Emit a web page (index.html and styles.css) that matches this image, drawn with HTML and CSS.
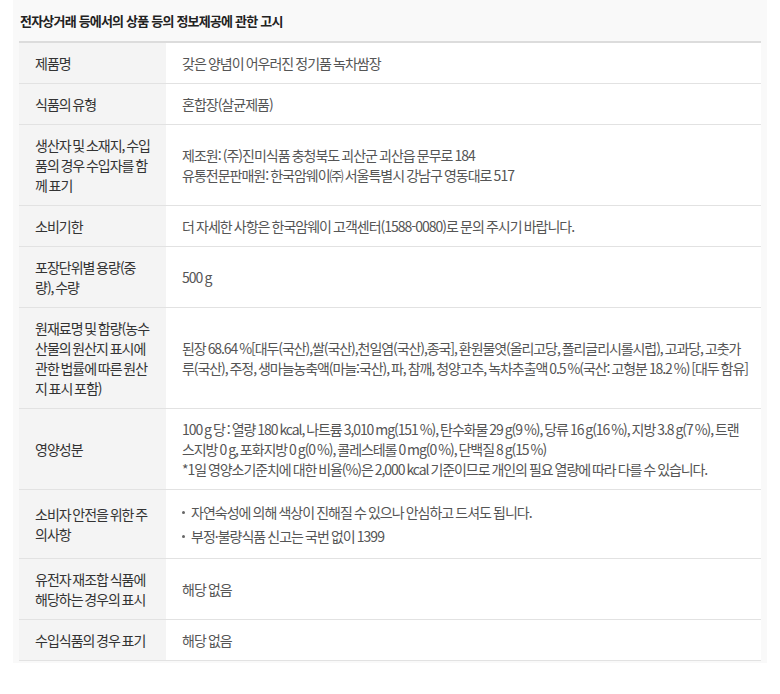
FILE: index.html
```html
<!DOCTYPE html>
<html lang="ko">
<head>
<meta charset="utf-8">
<title>상품정보제공 고시</title>
<link rel="stylesheet" href="styles.css">
</head>
<body>
<section class="notice">
  <h2 class="notice-title">전자상거래 등에서의 상품 등의 정보제공에 관한 고시</h2>
  <table class="info-table">
    <tbody>
      <tr><th>제품명</th><td>갖은 양념이 어우러진 정기품 녹차쌈장</td></tr>
      <tr><th>식품의 유형</th><td>혼합장(살균제품)</td></tr>
      <tr><th>생산자 및 소재지, 수입품의 경우 수입자를 함께 표기</th><td>제조원: (주)진미식품 충청북도 괴산군 괴산읍 문무로 184<br>유통전문판매원: 한국암웨이㈜ 서울특별시 강남구 영동대로 517</td></tr>
      <tr><th>소비기한</th><td>더 자세한 사항은 한국암웨이 고객센터(1588-0080)로 문의 주시기 바랍니다.</td></tr>
      <tr><th>포장단위별 용량(중량), 수량</th><td>500 g</td></tr>
      <tr><th>원재료명 및 함량(농수산물의 원산지 표시에 관한 법률에 따른 원산지 표시 포함)</th><td class="fixed-lines">된장 68.64 %[대두(국산),쌀(국산),천일염(국산),종국], 환원물엿(올리고당, 폴리글리시롤시럽), 고과당, 고춧가<br>루(국산), 주정, 생마늘농축액(마늘:국산), 파, 참깨, 청양고추, 녹차추출액 0.5 %(국산: 고형분 18.2 %) [대두 함유]</td></tr>
      <tr><th>영양성분</th><td class="fixed-lines">100 g 당 : 열량 180 kcal, 나트륨 3,010 mg(151 %), 탄수화물 29 g(9 %), 당류 16 g(16 %), 지방 3.8 g(7 %), 트랜<br>스지방 0 g, 포화지방 0 g(0 %), 콜레스테롤 0 mg(0 %), 단백질 8 g(15 %)<br>*1일 영양소기준치에 대한 비율(%)은 2,000 kcal 기준이므로 개인의 필요 열량에 따라 다를 수 있습니다.</td></tr>
      <tr><th>소비자 안전을 위한 주의사항</th><td><ul class="dot-list"><li>자연숙성에 의해 색상이 진해질 수 있으나 안심하고 드셔도 됩니다.</li><li>부정·불량식품 신고는 국번 없이 1399</li></ul></td></tr>
      <tr><th>유전자 재조합 식품에 해당하는 경우의 표시</th><td>해당 없음</td></tr>
      <tr><th>수입식품의 경우 표기</th><td>해당 없음</td></tr>
    </tbody>
  </table>
</section>
</body>
</html>
```
FILE: styles.css
```css
html, body {
  margin: 0;
  padding: 0;
  background: #fff;
}
body {
  font-family: "Noto Sans CJK KR", "Noto Sans", sans-serif;
  font-size: 14px;
  letter-spacing: -1px;
  word-spacing: -0.8px;
}
.notice {
  margin-left: 13px;
  width: 754px;
  box-sizing: border-box;
  padding: 0 6px 2px;
  background: #f9f9f9;
}
.notice-title {
  margin: 0;
  height: 41px;
  line-height: 41px;
  padding-left: 1px;
  font-size: 13px;
  font-weight: 700;
  color: #222;
  letter-spacing: -0.8px;
  word-spacing: 0;
}
.info-table {
  width: 100%;
  table-layout: fixed;
  border-collapse: collapse;
  border-top: 2px solid #dcdcdc;
  background: #fff;
}
.info-table th,
.info-table td {
  padding: 10px 16px;
  line-height: 20px;
  border-bottom: 1px solid #e2e2e2;
  vertical-align: middle;
  text-align: left;
}
.info-table th {
  width: 115px;
  background: #f4f4f4;
  font-weight: 400;
  color: #333;
  word-spacing: -1.2px;
}
.info-table td {
  color: #555;
}
.info-table td.fixed-lines {
  white-space: nowrap;
  letter-spacing: -1.08px;
}
.dot-list {
  list-style: none;
  margin: 0;
  padding: 0;
}
.dot-list li {
  padding: 2px 0;
  display: flex;
  align-items: center;
}
.dot-list li::before {
  content: "";
  width: 3px;
  height: 3px;
  border-radius: 50%;
  background: #666;
  margin-right: 6px;
  flex: none;
}
```
